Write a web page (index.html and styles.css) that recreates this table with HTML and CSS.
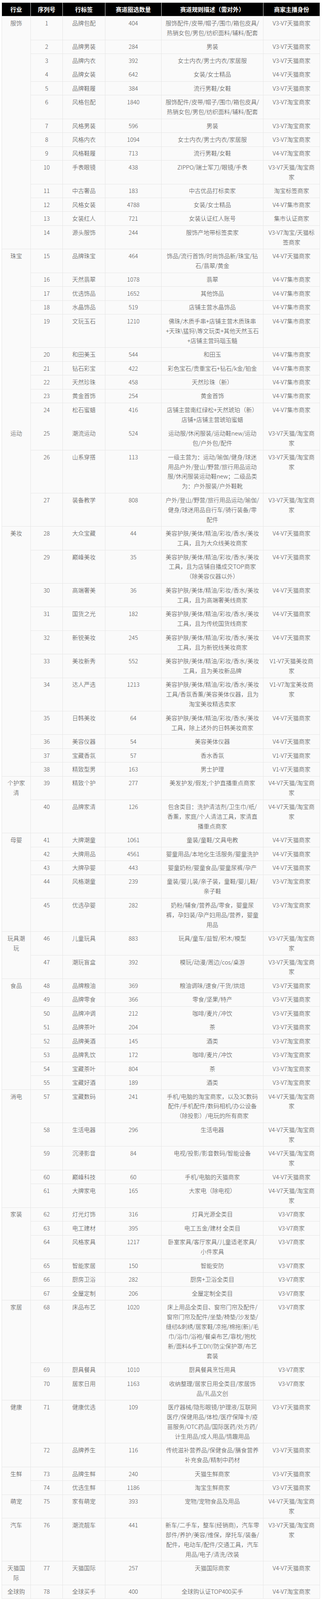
FILE: index.html
```html
<!DOCTYPE html>
<html lang="zh-CN">
<head>
<meta charset="utf-8">
<title>赛道</title>
<link rel="stylesheet" href="styles.css">
</head>
<body>
<div class="sheet" role="table">
<div class="h">行业</div><div class="h">序列号</div><div class="h">行标签</div><div class="h">赛道圈选数量</div><div class="h">赛道规则描述（需对外）</div><div class="h">商家主播身份</div>

<div class="c s14">服饰</div><div class="c">1</div><div class="c">品牌包配</div><div class="c">404</div><div class="c">服饰配件/皮带/帽子/围巾/箱包皮具/<br>热销女包/男包/纺织面料/辅料/配套</div><div class="c">V3-V7天猫商家</div>
<div class="c">2</div><div class="c">品牌男装</div><div class="c">284</div><div class="c">男装</div><div class="c">V3-V7天猫商家</div>
<div class="c">3</div><div class="c">品牌内衣</div><div class="c">392</div><div class="c">女士内衣/男士内衣/家居服</div><div class="c">V3-V7天猫商家</div>
<div class="c">4</div><div class="c">品牌女装</div><div class="c">642</div><div class="c">女装/女士精品</div><div class="c">V4-V7天猫商家</div>
<div class="c">5</div><div class="c">品牌鞋履</div><div class="c">384</div><div class="c">流行男鞋/女鞋</div><div class="c">V3-V7天猫商家</div>
<div class="c">6</div><div class="c">风格包配</div><div class="c">1840</div><div class="c">服饰配件/皮带/帽子/围巾/箱包皮具/<br>热销女包/男包/纺织面料/辅料/配套</div><div class="c">V3-V7淘宝商家</div>
<div class="c">7</div><div class="c">风格男装</div><div class="c">596</div><div class="c">男装</div><div class="c">V3-V7淘宝商家</div>
<div class="c">8</div><div class="c">风格内衣</div><div class="c">1094</div><div class="c">女士内衣/男士内衣/家居服</div><div class="c">V3-V7淘宝商家</div>
<div class="c">9</div><div class="c">风格鞋履</div><div class="c">713</div><div class="c">流行男鞋/女鞋</div><div class="c">V4-V7淘宝商家</div>
<div class="c">10</div><div class="c">手表眼镜</div><div class="c">438</div><div class="c">ZIPPO/瑞士军刀/眼镜/手表</div><div class="c">V3-V7天猫/淘宝商<br>家</div>
<div class="c">11</div><div class="c">中古奢品</div><div class="c">183</div><div class="c">中古优品打标卖家</div><div class="c">淘宝标签商家</div>
<div class="c">12</div><div class="c">风格女装</div><div class="c">4788</div><div class="c">女装/女士精品</div><div class="c">V4-V7集市商家</div>
<div class="c">13</div><div class="c">女装红人</div><div class="c">721</div><div class="c">女装认证红人账号</div><div class="c">集市认证商家</div>
<div class="c">14</div><div class="c">源头服饰</div><div class="c">244</div><div class="c">服饰产地带标签卖家</div><div class="c">V3-V7淘宝/天猫标<br>签商家</div>

<div class="c s10">珠宝</div><div class="c">15</div><div class="c">品牌珠宝</div><div class="c">464</div><div class="c">饰品/流行首饰/时尚饰品新/珠宝/钻<br>石/翡翠/黄金</div><div class="c">V4-V7天猫商家</div>
<div class="c">16</div><div class="c">天然翡翠</div><div class="c">1078</div><div class="c">翡翠</div><div class="c">V4-V7集市商家</div>
<div class="c">17</div><div class="c">优选饰品</div><div class="c">1652</div><div class="c">其他饰品</div><div class="c">V4-V7集市商家</div>
<div class="c">18</div><div class="c">水晶饰品</div><div class="c">519</div><div class="c">店铺主营水晶饰品</div><div class="c">V4-V7集市商家</div>
<div class="c">19</div><div class="c">文玩玉石</div><div class="c">1210</div><div class="c">佛珠/木质手串+店铺主营木质珠串<br>+天珠\猛犸\等文玩类+其他天然玉石<br>+店铺主营玛瑙玉髓</div><div class="c">V4-V7集市商家</div>
<div class="c">20</div><div class="c">和田美玉</div><div class="c">544</div><div class="c">和田玉</div><div class="c">V4-V7集市商家</div>
<div class="c">21</div><div class="c">钻石彩宝</div><div class="c">422</div><div class="c">彩色宝石/贵重宝石+钻石/k金/铂金</div><div class="c">V4-V7集市商家</div>
<div class="c">22</div><div class="c">天然珍珠</div><div class="c">458</div><div class="c">天然珍珠（新）</div><div class="c">V4-V7集市商家</div>
<div class="c">23</div><div class="c">黄金首饰</div><div class="c">254</div><div class="c">黄金首饰</div><div class="c">V4-V7集市商家</div>
<div class="c">24</div><div class="c">松石蜜蜡</div><div class="c">416</div><div class="c">店铺主营南红绿松+天然琥珀（新）<br>店铺+店铺主营琥珀蜜蜡</div><div class="c">V4-V7集市商家</div>

<div class="c s3">运动</div><div class="c">25</div><div class="c">潮流运动</div><div class="c">524</div><div class="c">运动服/休闲服装/运动鞋new/运动<br>包/户外包/配件</div><div class="c">V3-V7天猫/淘宝商<br>家</div>
<div class="c">26</div><div class="c">山系穿搭</div><div class="c">113</div><div class="c">一级主营为：运动/瑜伽/健身/球迷<br>用品户外/登山/野营/旅行用品运动<br>服/休闲服装运动鞋new；二级品类<br>为：户外服装/户外鞋靴</div><div class="c">V3-V7天猫/淘宝商<br>家</div>
<div class="c">27</div><div class="c">装备教学</div><div class="c">808</div><div class="c">户外/登山/野营/旅行用品运动/瑜伽/<br>健身/球迷用品自行车/骑行装备/零<br>配件</div><div class="c">V3-V7天猫/淘宝商<br>家</div>

<div class="c s11">美妆</div><div class="c">28</div><div class="c">大众宝藏</div><div class="c">44</div><div class="c">美容护肤/美体/精油/彩妆/香水/美妆<br>工具，且为大众线美妆商家</div><div class="c">V4-V7天猫商家</div>
<div class="c">29</div><div class="c">巅峰美妆</div><div class="c">35</div><div class="c">美容护肤/美体/精油/彩妆/香水/美妆<br>工具，且为店铺自播成交TOP商家<br>（除美容仪器以外）</div><div class="c">V4-V7天猫商家</div>
<div class="c">30</div><div class="c">高端奢美</div><div class="c">36</div><div class="c">美容护肤/美体/精油/彩妆/香水/美妆<br>工具，且为高端奢美线商家</div><div class="c">V4-V7天猫商家</div>
<div class="c">31</div><div class="c">国货之光</div><div class="c">182</div><div class="c">美容护肤/美体/精油/彩妆/香水/美妆<br>工具，且为传统国货线商家</div><div class="c">V4-V7天猫商家</div>
<div class="c">32</div><div class="c">新锐美妆</div><div class="c">245</div><div class="c">美容护肤/美体/精油/彩妆/香水/美妆<br>工具，且为新锐线美妆商家</div><div class="c">V4-V7天猫商家</div>
<div class="c">33</div><div class="c">美妆新秀</div><div class="c">552</div><div class="c">美容护肤/美体/精油/彩妆/香水/美妆<br>工具，且为美妆新品牌</div><div class="c">V1-V7天猫美妆商<br>家</div>
<div class="c">34</div><div class="c">达人严选</div><div class="c">1213</div><div class="c">美容护肤/美体/精油/彩妆/香水/美妆<br>工具/香氛香薰/美容美体仪器，且为<br>淘宝美妆精选卖家</div><div class="c">V1-V7淘宝美妆商<br>家</div>
<div class="c">35</div><div class="c">日韩美妆</div><div class="c">64</div><div class="c">美容护肤/美体/精油/彩妆/香水/美妆<br>工具，除上述外的日韩美妆商家</div><div class="c">V4-V7天猫商家</div>
<div class="c">36</div><div class="c">美容仪器</div><div class="c">54</div><div class="c">美容美体仪器</div><div class="c">V4-V7天猫商家</div>
<div class="c">37</div><div class="c">宝藏香氛</div><div class="c">57</div><div class="c">香水香氛</div><div class="c">V1-V7天猫商家</div>
<div class="c">38</div><div class="c">精致型男</div><div class="c">163</div><div class="c">男士护理</div><div class="c">V1-V7天猫商家</div>

<div class="c s2">个护家<br>清</div><div class="c">39</div><div class="c">精致个护</div><div class="c">277</div><div class="c">美发护发/假发;个护直播重点商家</div><div class="c">V4-V7天猫/淘宝商<br>家</div>
<div class="c">40</div><div class="c">品牌家清</div><div class="c">126</div><div class="c">包含类目：洗护清洁剂/卫生巾/纸/<br>香薰，家庭/个人清洁工具，家清直<br>播重点商家</div><div class="c">V4-V7天猫/淘宝商<br>家</div>

<div class="c s5">母婴</div><div class="c">41</div><div class="c">大牌潮童</div><div class="c">1061</div><div class="c">童装/童鞋/文具电教</div><div class="c">V4-V7天猫商家</div>
<div class="c">42</div><div class="c">大牌用品</div><div class="c">4561</div><div class="c">婴童用品/本地化生活服务/婴童洗护</div><div class="c">V4-V7天猫商家</div>
<div class="c">43</div><div class="c">大牌孕婴</div><div class="c">443</div><div class="c">婴童奶粉/婴童食品/婴童尿裤/孕产</div><div class="c">V4-V7天猫商家</div>
<div class="c">44</div><div class="c">风格潮童</div><div class="c">239</div><div class="c">童装/婴儿装/亲子装，童鞋/婴儿鞋/<br>亲子鞋</div><div class="c">V3-V7淘宝商家</div>
<div class="c">45</div><div class="c">优选孕婴</div><div class="c">282</div><div class="c">奶粉/辅食/营养品/零食，婴童尿<br>裤，孕妇装/孕产妇用品/营养，婴童<br>用品</div><div class="c">V3-V7淘宝商家</div>

<div class="c s2">玩具潮<br>玩</div><div class="c">46</div><div class="c">儿童玩具</div><div class="c">883</div><div class="c">玩具/童车/益智/积木/模型</div><div class="c">V3-V7天猫/淘宝商<br>家</div>
<div class="c">47</div><div class="c">潮玩盲盒</div><div class="c">392</div><div class="c">模玩/动漫/周边/cos/桌游</div><div class="c">V3-V7天猫/淘宝商<br>家</div>

<div class="c s8">食品</div><div class="c">48</div><div class="c">品牌粮油</div><div class="c">369</div><div class="c">粮油调味/速食/干货/烘焙</div><div class="c">V3-V7天猫商家</div>
<div class="c">49</div><div class="c">品牌零食</div><div class="c">366</div><div class="c">零食/坚果/特产</div><div class="c">V3-V7天猫商家</div>
<div class="c">50</div><div class="c">品牌冲调</div><div class="c">212</div><div class="c">咖啡/麦片/冲饮</div><div class="c">V3-V7天猫商家</div>
<div class="c">51</div><div class="c">品牌茶叶</div><div class="c">204</div><div class="c">茶</div><div class="c">V3-V7天猫商家</div>
<div class="c">52</div><div class="c">品牌美酒</div><div class="c">145</div><div class="c">酒类</div><div class="c">V3-V7淘宝商家</div>
<div class="c">53</div><div class="c">品牌乳饮</div><div class="c">172</div><div class="c">咖啡/麦片/冲饮</div><div class="c">V3-V7淘宝商家</div>
<div class="c">54</div><div class="c">宝藏茶叶</div><div class="c">804</div><div class="c">茶</div><div class="c">V3-V7淘宝商家</div>
<div class="c">55</div><div class="c">宝藏好酒</div><div class="c">189</div><div class="c">酒类</div><div class="c">V3-V7淘宝商家</div>

<div class="c s5">消电</div><div class="c">57</div><div class="c">宝藏数码</div><div class="c">241</div><div class="c">手机/电脑的淘宝商家，以及3C数码<br>配件/手机配件/数码相机/办公设备<br>（除投影）/电玩的所有商家</div><div class="c">V4-V7天猫/淘宝商<br>家</div>
<div class="c">58</div><div class="c">生活电器</div><div class="c">296</div><div class="c">生活电器</div><div class="c">V4-V7天猫/淘宝商<br>家</div>
<div class="c">59</div><div class="c">沉浸影音</div><div class="c">84</div><div class="c">电视/投影/影音数码/智能设备</div><div class="c">V4-V7天猫/淘宝商<br>家</div>
<div class="c">60</div><div class="c">巅峰科技</div><div class="c">60</div><div class="c">手机/电脑的天猫商家</div><div class="c">V4-V7天猫商家</div>
<div class="c">61</div><div class="c">大牌家电</div><div class="c">165</div><div class="c">大家电（除电视）</div><div class="c">V4-V7天猫/淘宝商<br>家</div>

<div class="c s6">家装</div><div class="c">62</div><div class="c">灯光灯饰</div><div class="c">316</div><div class="c">灯具光源全类目</div><div class="c">V3-V7商家</div>
<div class="c">63</div><div class="c">电工建材</div><div class="c">395</div><div class="c">电工五金/建材 全类目</div><div class="c">V3-V7商家</div>
<div class="c">64</div><div class="c">风格家具</div><div class="c">1217</div><div class="c">卧室家具/客厅家具/儿童适老家具/<br>小件家具</div><div class="c">V3-V7商家</div>
<div class="c">65</div><div class="c">智能家居</div><div class="c">150</div><div class="c">智能安防</div><div class="c">V3-V7商家</div>
<div class="c">66</div><div class="c">厨房卫浴</div><div class="c">282</div><div class="c">厨房+卫浴全类目</div><div class="c">V3-V7商家</div>
<div class="c">67</div><div class="c">全屋定制</div><div class="c">206</div><div class="c">全屋定制全类目</div><div class="c">V3-V7商家</div>

<div class="c s3">家居</div><div class="c">68</div><div class="c">床品布艺</div><div class="c">1020</div><div class="c">床上用品全类目、窗帘门帘及配件/<br>窗帘门帘及配件/坐垫/椅垫/沙发垫/<br>缝纫&amp;刺绣/居家鞋/凉拖/棉拖(新)/毛<br>巾/浴巾/浴袍/餐桌布艺/靠枕/抱枕<br>新/面料&amp;手工DIY/防尘保护罩/布艺<br>套装</div><div class="c">V3-V7商家</div>
<div class="c">69</div><div class="c">厨具餐具</div><div class="c">1010</div><div class="c">厨具餐具烹饪用具</div><div class="c">V3-V7商家</div>
<div class="c">70</div><div class="c">居家日用</div><div class="c">1163</div><div class="c">收纳整理/居家日用全类目/家居饰<br>品/礼品文创</div><div class="c">V3-V7商家</div>

<div class="c s2">健康</div><div class="c">71</div><div class="c">健康优选</div><div class="c">109</div><div class="c">医疗器械/隐形眼镜/护理液/互联网<br>医疗/保健用品/体检/医疗保障卡/疫<br>苗服务/OTC药品/国际医药/处方药/<br>计生用品/成人用品/情趣用品</div><div class="c">V3-V7天猫商家</div>
<div class="c">72</div><div class="c">品牌养生</div><div class="c">116</div><div class="c">传统滋补营养品/保健食品/膳食营养<br>补充食品/精制中药材</div><div class="c">V3-V7天猫商家</div>

<div class="c s2">生鲜</div><div class="c">73</div><div class="c">品牌生鲜</div><div class="c">240</div><div class="c">天猫生鲜商家</div><div class="c">V3-V7天猫商家</div>
<div class="c">74</div><div class="c">优选生鲜</div><div class="c">1186</div><div class="c">淘宝生鲜商家</div><div class="c">V3-V7天猫商家</div>

<div class="c">萌宠</div><div class="c">75</div><div class="c">家有萌宠</div><div class="c">393</div><div class="c">宠物/宠物食品及用品</div><div class="c">V4-V7天猫/淘宝商<br>家</div>
<div class="c">汽车</div><div class="c">76</div><div class="c">潮流靓车</div><div class="c">441</div><div class="c">新车/二手车，整车(经销商)，汽车零<br>部件/养护/美容/维保，摩托车/装备/<br>配件，电动车/配件/交通工具，汽车<br>用品/电子/清洗/改装</div><div class="c">V3-V7天猫/淘宝商<br>家</div>
<div class="c">天猫国<br>际</div><div class="c">77</div><div class="c">天猫国际</div><div class="c">257</div><div class="c">天猫国际商家</div><div class="c">V4-V7天猫商家</div>
<div class="c">全球购</div><div class="c">78</div><div class="c">全球买手</div><div class="c">400</div><div class="c">全球购认证TOP400买手</div><div class="c">V4-V7淘宝商家</div>
</div>
</body>
</html>
```

FILE: styles.css
```css
html, body {
  margin: 0;
  padding: 0;
  background: #ffffff;
}

/* vertical metrics fitted to the 4096px-tall capture viewport */
.sheet {
  display: grid;
  width: max-content;
  margin: 5.75px 0 0 4px;
  padding: 1px;
  gap: 0.96px 1px;
  background: #e6e6e6;
  grid-template-columns: 73px 81px 108px 143px 260px 144px;
  grid-template-rows:
    34.51px
    59.43px 34.51px 34.51px 34.51px 34.51px 59.43px 34.51px 34.51px 34.51px 59.43px 34.51px 34.51px 34.51px 59.43px
    59.43px 34.51px 34.51px 34.51px 84.36px 34.51px 34.51px 34.51px 34.51px 59.43px
    59.43px 109.28px 84.36px
    59.43px 84.36px 59.43px 59.43px 59.43px 59.43px 84.36px 59.43px 34.51px 34.51px 34.51px
    59.43px 84.36px
    34.51px 34.51px 34.51px 59.43px 84.36px
    59.43px 59.43px
    34.51px 34.51px 34.51px 34.51px 34.51px 34.51px 34.51px 34.51px
    84.36px 59.43px 59.43px 34.51px 59.43px
    34.51px 34.51px 59.43px 34.51px 34.51px 34.51px
    159.13px 34.51px 59.43px
    109.28px 59.43px
    34.51px 34.51px
    59.43px 109.28px 59.43px 34.51px;
  font-family: "Noto Sans CJK SC", "Noto Sans", sans-serif;
  font-size: 15px;
  line-height: 24.92px;
}

.h,
.c {
  padding: 4.8px 2px 0;
  text-align: center;
  white-space: nowrap;
  min-width: 0;
  min-height: 0;
}

.h {
  background: #000000;
  color: #ffffff;
  font-weight: 700;
}

.c {
  background: #fafafa;
  color: #4d4d4d;
  font-weight: 300;
}

.s2 { grid-row: span 2; }
.s3 { grid-row: span 3; }
.s5 { grid-row: span 5; }
.s6 { grid-row: span 6; }
.s8 { grid-row: span 8; }
.s10 { grid-row: span 10; }
.s11 { grid-row: span 11; }
.s14 { grid-row: span 14; }
```
